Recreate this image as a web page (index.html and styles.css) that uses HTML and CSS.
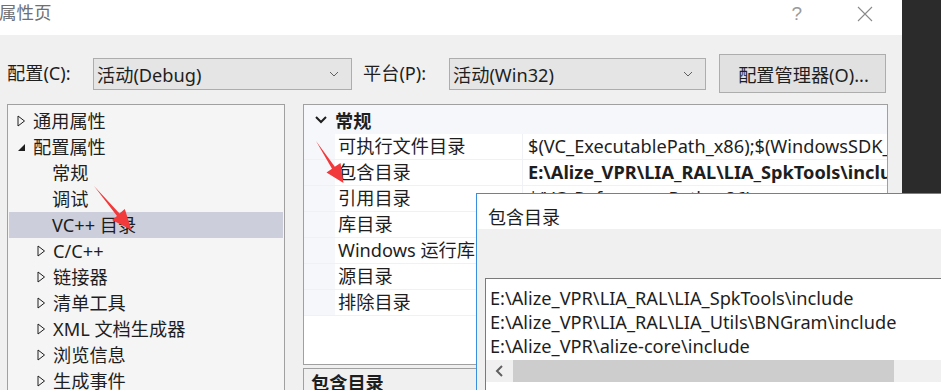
FILE: index.html
```html
<!DOCTYPE html>
<html lang="zh">
<head>
<meta charset="utf-8">
<link rel="stylesheet" href="styles.css">
</head>
<body>
<div class="screen">
  <div class="window">
    <div class="titlebar">
      <span class="title">属性页</span>
      <span class="spacer"></span>
      <span class="help">?</span>
      <span class="close">
        <svg width="16" height="16" viewBox="0 0 16 16"><path d="M1 1 L15 15 M15 1 L1 15" stroke="#8a8a8a" stroke-width="1.1" fill="none"/></svg>
      </span>
    </div>
    <div class="content">
      <div class="toolbar">
        <span class="label lbl-config">配置(C):</span>
        <div class="combo combo-config"><span class="combo-text">活动(Debug)</span><span class="chev"><svg width="10" height="6" viewBox="0 0 10 6"><path d="M1 1 L5 5 L9 1" stroke="#606060" stroke-width="1" fill="none"/></svg></span></div>
        <span class="label lbl-platform">平台(P):</span>
        <div class="combo combo-platform"><span class="combo-text">活动(Win32)</span><span class="chev"><svg width="10" height="6" viewBox="0 0 10 6"><path d="M1 1 L5 5 L9 1" stroke="#606060" stroke-width="1" fill="none"/></svg></span></div>
        <div class="button">配置管理器(O)...</div>
      </div>
      <div class="panes">
        <div class="tree">
          <div class="node lv0"><span class="tri"><svg width="9" height="12" viewBox="0 0 9 12"><path d="M1 1 L7.5 6 L1 11 Z" stroke="#1e1e1e" stroke-width="1" fill="none"/></svg></span>通用属性</div>
          <div class="node lv0"><span class="tri"><svg width="9" height="12" viewBox="0 0 9 12"><path d="M8 3 L8 10 L1 10 Z" fill="#1e1e1e"/></svg></span>配置属性</div>
          <div class="node lv1 leaf">常规</div>
          <div class="node lv1 leaf">调试</div>
          <div class="node lv1 leaf selected">VC++ 目录</div>
          <div class="node lv1"><span class="tri"><svg width="9" height="12" viewBox="0 0 9 12"><path d="M1 1 L7.5 6 L1 11 Z" stroke="#1e1e1e" stroke-width="1" fill="none"/></svg></span>C/C++</div>
          <div class="node lv1"><span class="tri"><svg width="9" height="12" viewBox="0 0 9 12"><path d="M1 1 L7.5 6 L1 11 Z" stroke="#1e1e1e" stroke-width="1" fill="none"/></svg></span>链接器</div>
          <div class="node lv1"><span class="tri"><svg width="9" height="12" viewBox="0 0 9 12"><path d="M1 1 L7.5 6 L1 11 Z" stroke="#1e1e1e" stroke-width="1" fill="none"/></svg></span>清单工具</div>
          <div class="node lv1"><span class="tri"><svg width="9" height="12" viewBox="0 0 9 12"><path d="M1 1 L7.5 6 L1 11 Z" stroke="#1e1e1e" stroke-width="1" fill="none"/></svg></span>XML 文档生成器</div>
          <div class="node lv1"><span class="tri"><svg width="9" height="12" viewBox="0 0 9 12"><path d="M1 1 L7.5 6 L1 11 Z" stroke="#1e1e1e" stroke-width="1" fill="none"/></svg></span>浏览信息</div>
          <div class="node lv1"><span class="tri"><svg width="9" height="12" viewBox="0 0 9 12"><path d="M1 1 L7.5 6 L1 11 Z" stroke="#1e1e1e" stroke-width="1" fill="none"/></svg></span>生成事件</div>
        </div>
        <div class="rightcol">
          <div class="grid">
            <div class="cat"><span class="cat-chev"><svg width="12" height="8" viewBox="0 0 12 8"><path d="M1 1 L6 6 L11 1" stroke="#1e1e1e" stroke-width="2" fill="none"/></svg></span><span class="cat-name">常规</span></div>
            <div class="row"><span class="gut"></span><span class="name">可执行文件目录</span><span class="val">$(VC_ExecutablePath_x86);$(WindowsSDK_ExecutablePath)</span></div>
            <div class="row"><span class="gut"></span><span class="name">包含目录</span><span class="val bold">E:\Alize_VPR\LIA_RAL\LIA_SpkTools\include</span></div>
            <div class="row"><span class="gut"></span><span class="name">引用目录</span><span class="val">$(VC_ReferencesPath_x86);</span></div>
            <div class="row"><span class="gut"></span><span class="name">库目录</span><span class="val"></span></div>
            <div class="row"><span class="gut"></span><span class="name">Windows 运行库</span><span class="val"></span></div>
            <div class="row"><span class="gut"></span><span class="name">源目录</span><span class="val"></span></div>
            <div class="row"><span class="gut"></span><span class="name">排除目录</span><span class="val"></span></div>
          </div>
          <div class="desc">包含目录</div>
        </div>
      </div>
    </div>
  </div>
  <div class="backwin"></div>
</div>

<div class="dialog">
  <div class="dlg-title">包含目录</div>
  <div class="dlg-body">
    <div class="editbox">
      <div class="line">E:\Alize_VPR\LIA_RAL\LIA_SpkTools\include</div>
      <div class="line">E:\Alize_VPR\LIA_RAL\LIA_Utils\BNGram\include</div>
      <div class="line">E:\Alize_VPR\alize-core\include</div>
      <div class="hscroll">
        <span class="sarrow"><svg width="10" height="12" viewBox="0 0 10 12"><path d="M7 1 L2 6 L7 11" stroke="#606060" stroke-width="2" fill="none"/></svg></span>
        <span class="thumb"></span>
      </div>
    </div>
  </div>
</div>

<svg class="arrows" width="941" height="390" viewBox="0 0 941 390">
  <polygon points="94,186 119.5,213.5 124.8,209 131.5,230 112,220 117,216" fill="#f2393b"/>
  <polygon points="316,141 334.8,166.8 340.5,163 343.5,183 326.5,172.5 332,168.8" fill="#f2393b"/>
</svg>
</body>
</html>
```

FILE: styles.css
```css
* { box-sizing: border-box; }
html, body { margin: 0; padding: 0; }
body {
  width: 941px;
  height: 390px;
  overflow: hidden;
  position: relative;
  font-family: "Noto Sans", "Noto Sans CJK SC", sans-serif;
  font-size: 18.2px;
  color: #1e1e1e;
  background: #f0f0f0;
}
.screen { display: flex; height: 390px; }
.window { width: 902px; height: 390px; display: flex; flex-direction: column; background: #f0f0f0; }
.backwin { width: 39px; height: 390px; background: #2b2b2b; }

.titlebar {
  height: 35px;
  background: #ffffff;
  display: flex;
  align-items: center;
  flex-shrink: 0;
}
.title { font-size: 17.5px; color: #707070; margin-left: -1px; line-height: 1; padding-bottom: 9px; }
.spacer { flex: 1; }
.help { font-family: "Liberation Sans", sans-serif; font-size: 19px; color: #9a9a9a; margin-right: 55px; padding-bottom: 8px; }
.close { width: 16px; height: 16px; margin-right: 29px; margin-bottom: 8px; display: flex; }

.content { padding: 19px 0 0 7px; flex: 1; display: flex; flex-direction: column; }
.toolbar { display: flex; align-items: center; height: 39px; }
.label { line-height: 1; white-space: nowrap; }
.lbl-config { width: 86px; }
.lbl-platform { width: 86px; margin-left: 11px; }
.combo {
  height: 32px;
  border: 1px solid #adadad;
  background: #e5e5e5;
  display: flex;
  align-items: center;
  padding-left: 3px;
}
.combo-config { width: 259px; }
.combo-platform { width: 257px; }
.combo-text { flex: 1; white-space: nowrap; }
.chev { width: 20px; display: flex; justify-content: flex-start; margin-right: 2px; }
.button {
  width: 167px;
  height: 39px;
  margin-left: 13px;
  border: 1px solid #adadad;
  background: #e1e1e1;
  display: flex;
  align-items: center;
  justify-content: center;
  padding-left: 2px;
  white-space: nowrap;
}

.panes { display: flex; margin-top: 11px; gap: 18px; flex: 1; }
.tree {
  width: 278px;
  border: 1px solid #a0a0a0;
  border-bottom: none;
  background: #f5f5f5;
  padding-top: 3px;
}
.node { height: 26px; line-height: 24px; display: flex; align-items: center; white-space: nowrap; }
.tri { width: 16px; display: flex; align-items: center; }
.lv0 { padding-left: 9px; }
.lv1 { padding-left: 29px; }
.leaf { padding-left: 44px; }
.selected { background: #cccedb; margin-left: 1px; padding-left: 43px; margin-right: 1px; }

.rightcol { width: 585px; display: flex; flex-direction: column; }
.grid {
  height: 261px;
  border: 1px solid #a0a0a0;
  background: #ffffff;
  overflow: hidden;
}
.cat { height: 29px; background: #f5f7fa; display: flex; align-items: center; }
.cat-chev { width: 31px; display: flex; justify-content: center; padding-left: 3px; }
.cat-name { font-weight: bold; }
.row { height: 26px; display: flex; border-bottom: 1px solid #f0f1f4; }
.gut { width: 31px; background: #f5f7fa; flex-shrink: 0; }
.name { width: 188px; padding-left: 3px; line-height: 24px; white-space: nowrap; flex-shrink: 0; border-right: 1px solid #f0f1f4; overflow: hidden; }
.val { flex: 1; padding-left: 5px; line-height: 24px; white-space: nowrap; overflow: hidden; }
.bold { font-weight: bold; }
.desc {
  margin-top: 3px;
  flex: 1;
  border: 1px solid #a0a0a0;
  border-bottom: none;
  background: #f0f0f0;
  font-weight: bold;
  padding: 0 0 0 7px;
}

.dialog {
  position: absolute;
  left: 476px;
  top: 193px;
  width: 470px;
  height: 200px;
  border-top: 1px solid #3a8ee0;
  border-left: 1px solid #3a8ee0;
  background: #f0f0f0;
  display: flex;
  flex-direction: column;
}
.dlg-title { height: 44px; background: #ffffff; padding: 9px 0 0 11px; font-size: 18px; }
.dlg-body { flex: 1; padding: 49px 0 0 8px; }
.editbox {
  height: 120px;
  background: #ffffff;
  border-top: 1px solid #7a7a7a;
  border-left: 1px solid #7a7a7a;
  padding-top: 7px;
}
.line { height: 24px; line-height: 24px; padding-left: 4px; white-space: nowrap; }
.hscroll { margin-top: 2px; height: 22px; background: #f0f0f0; display: flex; align-items: center; }
.sarrow { width: 27px; display: flex; justify-content: center; }
.thumb { width: 381px; height: 22px; background: #cdcdcd; }

.arrows { position: absolute; left: 0; top: 0; pointer-events: none; }
```
